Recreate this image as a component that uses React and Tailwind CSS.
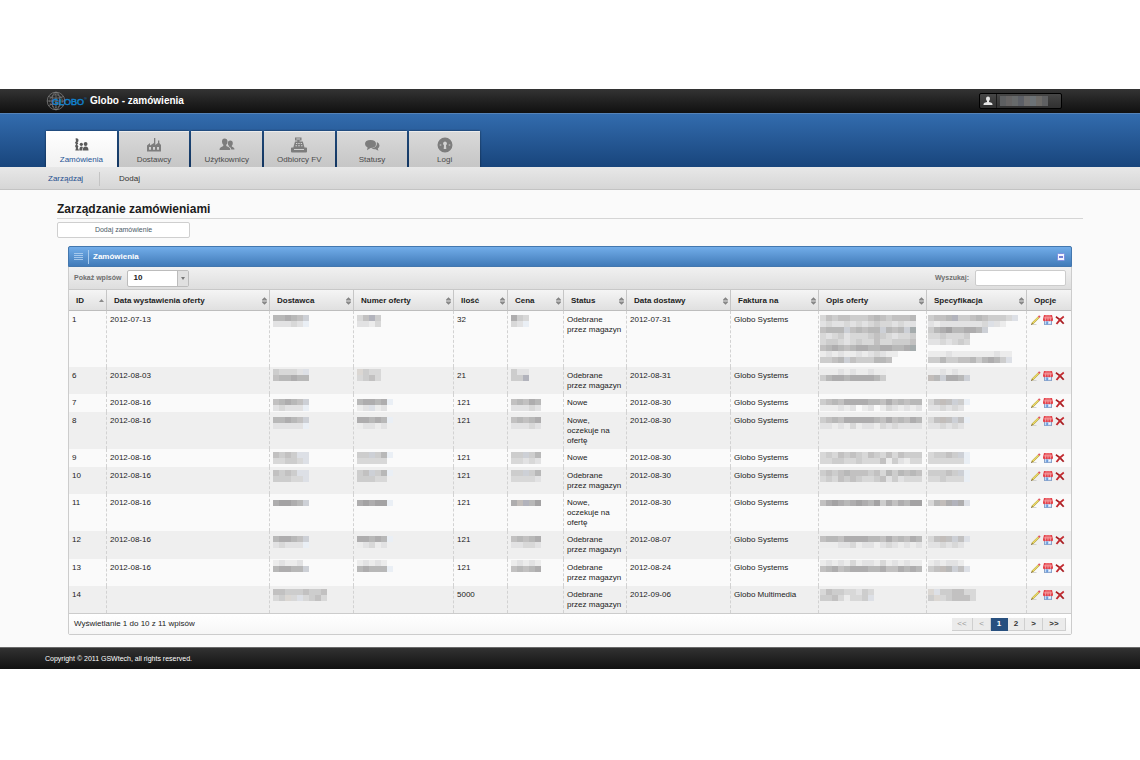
import React from "react";

const SHADES = {
  1: "#ececec",
  2: "#e2e2e3",
  3: "#d8d8d8",
  4: "#cdcdcd",
  5: "#c2c1c1",
  6: "#b8b8b8",
  7: "#aeadae",
  8: "#a3a2a3",
  a: "#eaeff5",
  b: "#dde0e6",
  c: "#cdd0d6",
  d: "#b2b3bc",
  e: "#c2bdba",
  f: "#a5acad",
  g: "#dbd7d3",
};

function Mosaic({ top, lines, height = 18 }) {
  const cols = Math.max(...lines.map((l) => l.length));
  return (
    <svg
      width={cols * 6}
      height={height}
      className="block"
      shapeRendering="crispEdges"
      aria-hidden="true"
    >
      {lines.map((line, r) =>
        [...line].map((ch, c) =>
          SHADES[ch] ? (
            <rect key={r + "-" + c} x={c * 6} y={top + r * 6} width="6" height="6" fill={SHADES[ch]} />
          ) : null
        )
      )}
    </svg>
  );
}

const H = { 18: "h-[18px]", 27: "h-[27px]", 28: "h-[28px]", 37: "h-[37px]", 56: "h-[56px]" };

const ODEBRANE = "Odebrane przez magazyn";
const OCZEKUJE = "Nowe, oczekuje na ofertę";

const ROWS = [
  { id: 1, h: 56, top: 4, date: "2012-07-13", sup: ["66765c", "22232a"], num: ["35d4", "2213"], qty: "32", price: ["743", "32a"], status: ODEBRANE, due: "2012-07-31", inv: "Globo Systems",
    desc: ["3545544456545556", "2322323234332322", "5666c56566c656cf", "3234233345432334", "3443234335334445", "567656776677667f", "1212112123211", "4456c5444665"], spec: ["4556d445654443b", "2122222223b21", "467866776c", "3343334", "2232343", "", "11121111111211", "4464455646764b"] },
  { id: 6, h: 27, top: 2, date: "2012-08-03", sup: ["43332b", "566766"], num: ["g433", "3453"], qty: "21", price: ["422", "44d"], status: ODEBRANE, due: "2012-08-31", inv: "Globo Systems",
    desc: ["11121211211", "46776777764"], spec: ["1121211", "e6c776c"] },
  { id: 7, h: 18, top: 5, date: "2012-08-16", sup: ["56765c", "23222a"], num: ["67767a", "12b12"], qty: "121", price: ["56576", "22232"], status: "Nowe", due: "2012-08-30", inv: "Globo Systems",
    desc: ["45657777665756566", "11121201201321212"], spec: ["35e5c4a", "223232"] },
  { id: 8, h: 37, top: 5, date: "2012-08-16", sup: ["66765c", "22222a"], num: ["77676a", "12212"], qty: "121", price: ["56567", "22232"], status: OCZEKUJE, due: "2012-08-30", inv: "Globo Systems",
    desc: ["45657777765756576", "22121312213232222"], spec: ["35e5c5a", "223232"] },
  { id: 9, h: 18, top: 3, date: "2012-08-16", sup: ["5454bb", "33443b"], num: ["44c46a", "33333"], qty: "121", price: ["44c46", "33232"], status: "Nowe", due: "2012-08-30", inv: "Globo Systems",
    desc: ["34354543543535444", "33443343335142133"], spec: ["34454ca", "333333a"] },
  { id: 10, h: 27, top: 3, date: "2012-08-16", sup: ["5454bb", "44433b"], num: ["45c46a", "44433"], qty: "121", price: ["44c46", "33332"], status: ODEBRANE, due: "2012-08-30", inv: "Globo Systems",
    desc: ["45456555453646565", "34354543345242333"], spec: ["44454ca", "334333a"] },
  { id: 11, h: 37, top: 6, date: "2012-08-16", sup: ["78876c"], num: ["78788a"], qty: "121", price: ["7ed68"], status: OCZEKUJE, due: "2012-08-30", inv: "Globo Systems",
    desc: ["57876787684757688"], spec: ["36e7d7b"] },
  { id: 12, h: 28, top: 5, date: "2012-08-16", sup: ["67765c", "23222a"], num: ["77676a", "12312"], qty: "121", price: ["56567", "22332"], status: ODEBRANE, due: "2012-08-07", inv: "Globo Systems",
    desc: ["56657777665756576", "11122312202321212"], spec: ["35e5c5b", "223232"] },
  { id: 13, h: 27, top: 1, date: "2012-08-16", sup: ["12112", "67766c"], num: ["12121", "67666a"], qty: "121", price: ["12121", "56567"], status: ODEBRANE, due: "2012-08-24", inv: "Globo Systems",
    desc: ["12121312213121211", "56756777667557676"], spec: ["121221", "45e6c5b"] },
  { id: 14, h: 27, top: 3, date: "", sup: ["554445445", "34g3b3453"], num: null, qty: "5000", price: null, status: ODEBRANE, due: "2012-09-06", inv: "Globo Multimedia",
    desc: ["354433243", "44531334b"], spec: ["gb445533", "4g345553"] },
];

const COLS = [
  ["ID", "w-[37px]", "asc"],
  ["Data wystawienia oferty", "w-[163px]", "both"],
  ["Dostawca", "w-[84px]", "both"],
  ["Numer oferty", "w-[100px]", "both"],
  ["Ilość", "w-[54px]", "both"],
  ["Cena", "w-[56px]", "both"],
  ["Status", "w-[63px]", "both"],
  ["Data dostawy", "w-[104px]", "both"],
  ["Faktura na", "w-[88px]", "both"],
  ["Opis oferty", "w-[108px]", "both"],
  ["Specyfikacja", "w-[100px]", "both"],
  ["Opcje", "w-[45px]", null],
];

function SortIcon({ kind }) {
  if (kind === "asc")
    return (
      <svg width="5" height="8" viewBox="0 0 5 8" fill="#8a8a8a" aria-hidden="true">
        <path d="M0 5 2.5 2 5 5z" />
      </svg>
    );
  return (
    <svg width="5" height="8" viewBox="0 0 5 8" fill="none" stroke="#828282" strokeWidth="1.1" aria-hidden="true">
      <path d="M.6 2.900 2.500 1 4.400 2.900zM.6 5.100 2.500 7 4.400 5.100z" />
    </svg>
  );
}

function PencilIcon() {
  return (
    <svg width="10" height="10" viewBox="0 0 10 10" className="block" aria-hidden="true">
      <path d="M1.5 9.5h4" stroke="#c9c9c9" strokeWidth=".8" />
      <path d="M.9 9 7.7 2.2" stroke="#b39d3c" strokeWidth="2" />
      <path d="M1.7 8.1 7.6 2.2" stroke="#eee06a" strokeWidth="1.2" />
      <path d="M7.6 2.3 8.9 1" stroke="#e0555f" strokeWidth="2.1" />
      <path d="M.2 9.7 1.3 8.6" stroke="#6b5a34" strokeWidth="1" />
    </svg>
  );
}

function ShopIcon() {
  return (
    <svg width="10" height="10" viewBox="0 0 10 10" className="block" aria-hidden="true">
      <path d="M1 5h8v4.6H1z" fill="#c3daf6" />
      <path d="M1.500 5.500v4M8.500 5.500v4M1 9.600h8" stroke="#7996bf" strokeWidth=".8" />
      <path d="M3.200 6.600h1.800v3H3.200z" fill="#6c9bdc" />
      <path d="M5.900 6.600h1.700v1.700H5.900z" fill="#f3f8ff" />
      <path d="M1 0h8l1 4v1q-.2 1.200-1.200 1.200T7.500 5.200q-.3 1-1.300 1T5 5.200q-.2 1-1.200 1t-1.300-1q-.3 1-1.300 1T0 5V4z" fill="#e5434b" />
      <path d="M3.200.2 2.500 5M5 .2v4.800M6.800.2 7.500 5M.8 2.900h8.400" stroke="#f9cccc" strokeWidth=".6" />
    </svg>
  );
}

function DeleteIcon() {
  return (
    <svg width="10" height="10" viewBox="0 0 10 10" className="block" aria-hidden="true">
      <path d="M.9 1.700Q5 4 8.700 8.800" fill="none" stroke="#a81d22" strokeWidth="1.700" />
      <path d="M8.800 1.400Q4.600 4.200 1.500 8.900" fill="none" stroke="#c22a2f" strokeWidth="1.800" />
    </svg>
  );
}

const TAB_ICONS = {
  orders: (
    <g>
      <path d="M2.5 1.5q2.5-.8 3 1.3.3 1.8-1 2.6l.8 1.2-1.2 1.2 1.3 1.4L4.8 11l1.3 2.5H2.3L3 11 2 9l1-1.5L2 5.500l1-1.200z" />
      <circle cx="8.3" cy="7.3" r="1.6" />
      <circle cx="12.6" cy="7" r="1.9" />
      <path d="M6.300 13.500q0-4 2.200-4 1 0 1.400 1-.8 1.200-.8 3zM9.700 13.500q0-4 2.900-4t2.900 4z" />
    </g>
  ),
  factory: (
    <path
      fillRule="evenodd"
      d="M1 14.500V8.500l3-2.500v2.500L8 6V1h1.300v7L12 6V3.500h1.300V6L15 8v6.500zM3 10v2.800h2V10zm4 0v2.800h2V10zm4 0v2.800h2V10z"
    />
  ),
  users: (
    <g>
      <path d="M5.500 1.500q3 0 3 3.300 0 2-1.200 3v1.200l3 1.500q1 .6 1 2.500H.5q0-2 1-2.500l2.800-1.500V7.800Q3 6.800 3 4.800q0-3.300 2.500-3.300z" />
      <path d="M11.300 3.500q2.500 0 2.500 2.700 0 1.600-1 2.500v.8l1.700.9q1 .6 1 2.100h-3.300q-.1-2-1.400-2.600l-1-.5V8.700q-1-.9-1-2.500 0-2.700 2.500-2.700z" />
    </g>
  ),
  register: (
    <path
      fillRule="evenodd"
      d="M4 .5h6.500v3H8.500v1h3.300l1.700 6h1.700q.8 0 .8.800v3.200q0 1-1 1H1q-1 0-1-1v-3.200q0-.8.800-.8h1.500l1.700-6h2.300v-1H4zM5.300 1.500v.9h3.900v-.9zM5 6v1h1.300V6zm2.300 0v1h1.400V6zm2.400 0v1H11V6zM4.500 8.300v1h1.500v-1zm2.700 0v1h1.600v-1zm2.800 0v1h1.500v-1zM3 12v1h10v-1z"
    />
  ),
  chat: (
    <path d="M6.500 3q5.500 0 5.500 4t-5.500 4L3 13.200l.6-2.800Q1 9.300 1 7q0-4 5.500-4zm6.400 2q2.600 1.100 2.600 3.600 0 1.800-1.700 2.900l.6 2.300-2.900-1.600q-2.500.2-4-.7 5.900-.7 5.400-6.500z" />
  ),
  lock: (
    <path
      fillRule="evenodd"
      d="M8 .5a7.500 7.500 0 1 1 0 15 7.500 7.500 0 0 1 0-15zm0 4a2 2 0 0 0-1 3.700L6.700 12h2.600L9 8.200a2 2 0 0 0-1-3.700zM2.700 7.500v1h1.600v-1zm9 0v1h1.600v-1z"
    />
  ),
};

const TABS = [
  ["Zamówienia", "orders"],
  ["Dostawcy", "factory"],
  ["Użytkownicy", "users"],
  ["Odbiorcy FV", "register"],
  ["Statusy", "chat"],
  ["Logi", "lock"],
];

function Logo() {
  return (
    <svg width="42" height="20" viewBox="0 0 42 20" className="block" role="img" aria-label="Globo">
      <g fill="none" stroke="#858585" strokeWidth=".7">
        <circle cx="10" cy="10" r="8.800" />
        <circle cx="10" cy="10" r="6.300" strokeDasharray="2 1" />
        <ellipse cx="10" cy="10" rx="4" ry="8.800" />
        <path d="M1.200 10h17.600M2.500 5.500Q10 9 17.500 5.500M2.500 14.500Q10 11 17.500 14.500M10 1.200v17.600" />
      </g>
      <text x="6" y="14" fontSize="9" fill="#1180cc" stroke="#1180cc" strokeWidth=".5" fontFamily="Liberation Sans, sans-serif">GLOBO</text>
      <text x="38" y="9" fontSize="4" fill="#1180cc" fontFamily="Liberation Sans, sans-serif">®</text>
    </svg>
  );
}

function PageButton({ children, width, state, label }) {
  const look =
    state === "active"
      ? "bg-[#28507f] text-white border-[#28507f] font-bold"
      : state === "off"
      ? "bg-[#ebebeb] text-[#999] border-[#cfcfcf]"
      : "bg-[#ebebeb] text-[#333] border-[#cfcfcf] font-bold";
  return (
    <button
      type="button"
      aria-label={label}
      disabled={state === "off"}
      className={"h-[13px] border-r border-b text-center leading-[12px] " + width + " " + look}
    >
      {children}
    </button>
  );
}

export default function App() {
  const edge = "border-l border-dashed border-[#d2d2d2] align-top ";
  const art = edge + "pl-[3px]";
  const wideArt = edge + "pl-px";
  const cell = edge + "pl-[3px] pt-1";
  return (
    <div className="bg-white pt-[89px] font-['Liberation_Sans',Arial,sans-serif] text-[8px] leading-[10px] text-[#222]">
      <header>
        <div className="flex h-6 items-center justify-between bg-linear-to-b from-[#343434] to-[#101010] pr-[78px] pl-[46px]">
          <div className="flex items-center gap-[2px]">
            <Logo />
            <span className="text-[10px] leading-3 font-bold text-white">Globo - zamówienia</span>
          </div>
          <button
            type="button"
            aria-label="Konto użytkownika"
            className="flex h-4 items-center rounded-xs border border-black bg-linear-to-b from-[#464646] to-[#303030]"
          >
            <span className="flex h-full w-[17px] items-center justify-center border-r border-[#1a1a1a]">
              <svg width="10" height="10" viewBox="0 0 10 10" fill="#e6e6e6" aria-hidden="true">
                <path d="M5 .5q2 0 2 2.200Q7 4 6 5v1l2.500.8q1 .4 1 1.700v.5h-9v-.5q0-1.300 1-1.700L4 6V5Q3 4 3 2.700 3 .5 5 .5z" />
              </svg>
            </span>
            <span className="flex w-16 pl-[3px]">
              <svg width="48" height="10" shapeRendering="crispEdges" aria-hidden="true">
                {["#5d5f61", "#666464", "#676a6b", "#5c5f66", "#706f6e", "#6c7276", "#6d6b68", "#5f6062"].map((c, i) => (
                  <rect key={i} x={i * 6} width="6" height="10" fill={c} />
                ))}
              </svg>
            </span>
          </button>
        </div>
        <nav className="flex h-[54px] items-end border-t border-[#5583b8] bg-linear-to-b from-[#336cae] to-[#18457c] pl-[46px]">
          <div className="grid w-[434px] grid-cols-6 gap-[2px]">
            {TABS.map(([name, icon], i) => (
              <a
                key={name}
                href={"#" + icon}
                className={
                  "flex h-9 flex-col items-center border-t pt-[5px] shadow-[0_0_2px_rgba(0,0,0,0.6)] [clip-path:inset(-2px_-2px_0_-2px)] " +
                  (i === 0
                    ? "border-white bg-linear-to-b from-white to-[#f1f1f1] text-[#1f5596]"
                    : "border-[#ececec] bg-linear-to-b from-[#d9d9d9] to-[#c6c6c6] text-[#4a4a4a]")
                }
              >
                <svg width="16" height="16" viewBox="0 0 16 16" fill={i === 0 ? "#5a5a5a" : "#7d7d7d"} aria-hidden="true">
                  {TAB_ICONS[icon]}
                </svg>
                <span className="mt-[2px]">{name}</span>
              </a>
            ))}
          </div>
        </nav>
        <nav className="flex h-[23px] items-center border-b border-[#c3c3c3] bg-linear-to-b from-[#e8e8e8] to-[#d6d6d6] pt-0.5 pl-12">
          <a href="#zarzadzaj" className="w-[52px] border-r border-[#c4c4c4] leading-[14px] text-[#1f4f8f]">Zarządzaj</a>
          <a href="#dodaj" className="pl-[19px] leading-[14px] text-[#333]">Dodaj</a>
        </nav>
      </header>

      <main className="bg-[#fafafa] px-[57px] pt-[11px] pb-3">
        <h1 className="border-b border-[#d5d5d5] pb-px text-[12px] leading-4 font-bold text-[#1c1c1c]">
          Zarządzanie zamówieniami
        </h1>
        <button
          type="button"
          className="mt-[3px] block h-4 w-[133px] rounded-xs border border-[#cfcfcf] bg-white text-center text-[7px] text-[#4b5a66]"
        >
          Dodaj zamówienie
        </button>

        <section className="mx-[11px] mt-2 rounded-xs border border-[#cccccc] bg-white">
          <div className="-mx-px -mt-px flex h-[21px] items-center rounded-t-xs border border-[#4377ae] bg-linear-to-b from-[#72ade9] to-[#417bb9] pr-[6px] pl-[5px] text-white">
            <svg width="9" height="9" viewBox="0 0 9 9" stroke="#b7d4f2" aria-hidden="true">
              <path d="M0 1.500h9M0 3.500h9M0 5.500h9M0 7.500h9" strokeWidth=".8" />
            </svg>
            <h2 className="ml-[5px] border-l border-[#a8cbee] pl-1 leading-[14px] font-bold">Zamówienia</h2>
            <button type="button" aria-label="Zwiń" className="ml-auto">
              <svg width="8" height="8" viewBox="0 0 8 8" className="block" aria-hidden="true">
                <rect x=".5" y=".5" width="7" height="7" rx="1" fill="#f2f4ff" stroke="#7d8fe0" />
                <path d="M2 4h4" stroke="#3a4ec0" strokeWidth="1.400" />
              </svg>
            </button>
          </div>

          <div className="flex h-[23px] items-center justify-between border-b border-[#c8c8c8] bg-linear-to-b from-[#f1f1f1] to-[#dedede] px-[5px] font-bold text-[#6f6f6f]">
            <div className="flex items-center gap-[6px]">
              <label htmlFor="page-size" className="text-[7px]">Pokaż wpisów</label>
              <span className="relative flex">
                <select
                  id="page-size"
                  defaultValue="10"
                  className="h-[17px] w-[62px] appearance-none rounded-xs border border-[#bcbcbc] bg-white pl-[5px] font-bold text-[#222]"
                >
                  <option>10</option>
                  <option>25</option>
                  <option>50</option>
                </select>
                <span className="pointer-events-none absolute inset-y-px right-px flex w-[11px] items-center justify-center border-l border-[#bcbcbc] bg-[#e0e0e0]">
                  <svg width="4" height="3" viewBox="0 0 4 3" fill="#777" aria-hidden="true">
                    <path d="M0 0h4L2 3z" />
                  </svg>
                </span>
              </span>
            </div>
            <div className="flex items-center gap-[6px]">
              <label htmlFor="search" className="text-[7px]">Wyszukaj:</label>
              <input
                id="search"
                type="text"
                className="h-4 w-[91px] rounded-xs border border-[#cccccc] bg-white px-1 font-normal text-[#222]"
              />
            </div>
          </div>

          <table className="w-full table-fixed border-separate border-spacing-0">
            <thead>
              <tr className="h-[21px] bg-linear-to-b from-[#f5f5f5] to-[#dfdfdf]">
                {COLS.map(([name, width, sort], i) => (
                  <th
                    key={name}
                    scope="col"
                    className={"border-b border-[#bdbdbd] px-0 pt-px pb-0 text-left text-[#1c1c1c] " + width + (i ? " border-l border-l-[#c6c6c6]" : "")}
                  >
                    {sort ? (
                      <button type="button" className="flex w-full items-center justify-between pr-[2px] pl-[7px] font-bold whitespace-nowrap">
                        {name}
                        <SortIcon kind={sort} />
                      </button>
                    ) : (
                      <span className="pl-[7px]">{name}</span>
                    )}
                  </th>
                ))}
              </tr>
            </thead>
            <tbody>
              {ROWS.map((r, i) => (
                <tr key={r.id} className={H[r.h] + (i % 2 ? " bg-[#efefef]" : " bg-[#fafafa]")}>
                  <td className="pt-1 pl-[3px] align-top">{r.id}</td>
                  <td className={cell}>{r.date}</td>
                  <td className={art}>{r.sup && <Mosaic top={r.top} lines={r.sup} />}</td>
                  <td className={art}>{r.num && <Mosaic top={r.top} lines={r.num} />}</td>
                  <td className={cell}>{r.qty}</td>
                  <td className={art}>{r.price && <Mosaic top={r.top} lines={r.price} />}</td>
                  <td className={cell + " pr-1"}>{r.status}</td>
                  <td className={cell}>{r.due}</td>
                  <td className={cell}>{r.inv}</td>
                  <td className={wideArt}>
                    <Mosaic top={r.top} lines={r.desc} height={r.desc.length > 2 ? 54 : 18} />
                  </td>
                  <td className={wideArt}>
                    <Mosaic top={r.top} lines={r.spec} height={r.spec.length > 2 ? 54 : 18} />
                  </td>
                  <td className={cell}>
                    <div className="flex gap-[2px] pl-px">
                      <button type="button" aria-label="Edytuj"><PencilIcon /></button>
                      <button type="button" aria-label="Magazyn"><ShopIcon /></button>
                      <button type="button" aria-label="Usuń"><DeleteIcon /></button>
                    </div>
                  </td>
                </tr>
              ))}
            </tbody>
          </table>

          <div className="flex h-[21px] items-center justify-between border-t border-[#cccccc] bg-linear-to-b from-white to-[#f6f6f6] px-[5px]">
            <p>Wyświetlanie 1 do 10 z 11 wpisów</p>
            <div className="flex">
              <PageButton width="w-[21px]" state="off" label="Pierwsza">&lt;&lt;</PageButton>
              <PageButton width="w-[18px]" state="off" label="Poprzednia">&lt;</PageButton>
              <PageButton width="w-[17px]" state="active" label="Strona 1">1</PageButton>
              <PageButton width="w-[17px]" label="Strona 2">2</PageButton>
              <PageButton width="w-[18px]" label="Następna">&gt;</PageButton>
              <PageButton width="w-[23px]" label="Ostatnia">&gt;&gt;</PageButton>
            </div>
          </div>
        </section>
      </main>

      <footer className="flex h-[22px] items-center border-t border-[#6a6a6a] bg-linear-to-b from-[#323232] to-[#121212] pl-[45px] text-[7px] text-white">
        Copyright © 2011 GSWtech, all rights reserved.
      </footer>
    </div>
  );
}
